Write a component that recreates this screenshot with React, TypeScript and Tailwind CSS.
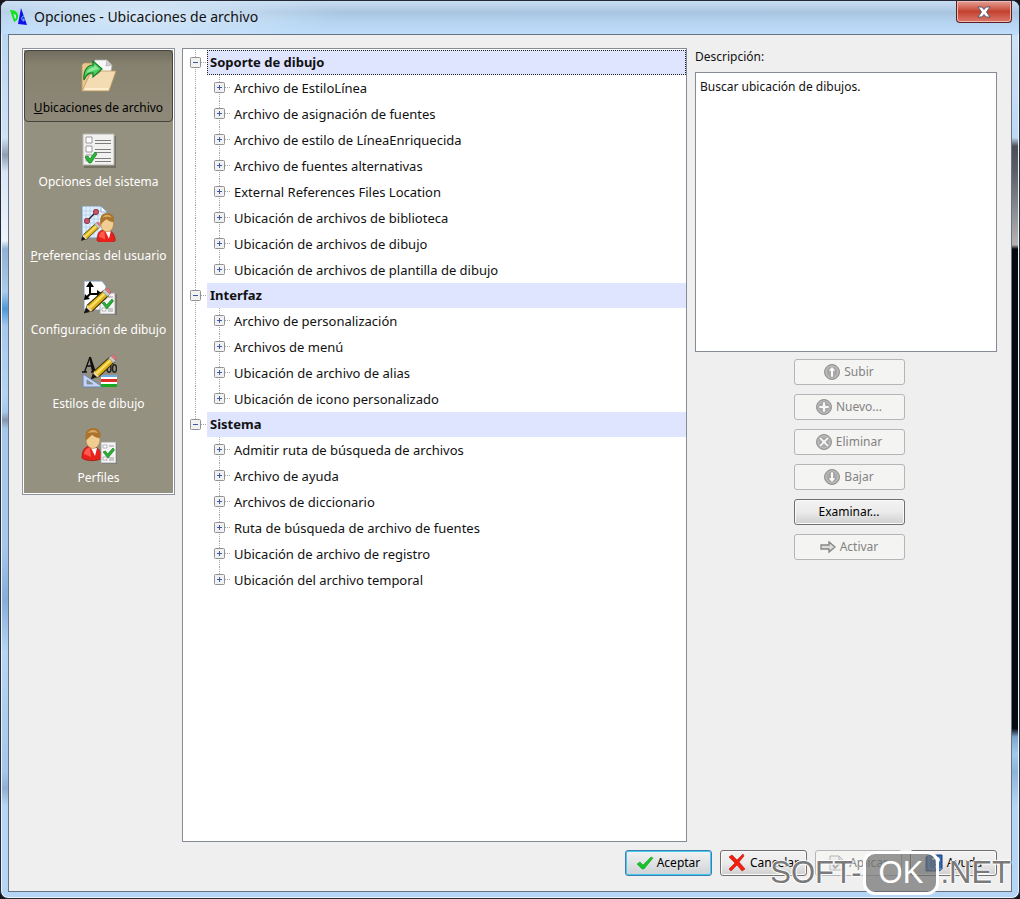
/**
 * App.tsx: CAD options dialog, "Ubicaciones de archivo" page
 * Sidebar with the option pages, tree of file locations, description + actions
 */
import React, { useState } from 'react';

interface Section {
    title: string;
    items: string[];
}

const SECTIONS: Section[] = [
    {
        title: 'Soporte de dibujo',
        items: [
            'Archivo de EstiloLínea',
            'Archivo de asignación de fuentes',
            'Archivo de estilo de LíneaEnriquecida',
            'Archivo de fuentes alternativas',
            'External References Files Location',
            'Ubicación de archivos de biblioteca',
            'Ubicación de archivos de dibujo',
            'Ubicación de archivos de plantilla de dibujo',
        ],
    },
    {
        title: 'Interfaz',
        items: [
            'Archivo de personalización',
            'Archivos de menú',
            'Ubicación de archivo de alias',
            'Ubicación de icono personalizado',
        ],
    },
    {
        title: 'Sistema',
        items: [
            'Admitir ruta de búsqueda de archivos',
            'Archivo de ayuda',
            'Archivos de diccionario',
            'Ruta de búsqueda de archivo de fuentes',
            'Ubicación de archivo de registro',
            'Ubicación del archivo temporal',
        ],
    },
];

/* ---------- Shared icon parts ---------- */

const Pencil = () => (
    <g>
        <path d="M1 34l3-9 19-17 6 6-19 18z" fill="#dfb21c" stroke="#3d300c" strokeWidth="1.300" />
        <path d="M6 27l18-17 2 2L8 29z" fill="#fbe266" />
        <path d="M1 34l3-9 6 7z" fill="#f3d9a8" />
        <path d="M0 35l2.500-7 5 4.500z" fill="#151515" />
        <path d="M22 9l3-3 6 6-3 3z" fill="#c5c8cc" stroke="#777" strokeWidth=".6" />
        <path d="M25 6c2-3.500 9 3 6 6z" fill="#e8787c" stroke="#b25558" strokeWidth=".6" />
    </g>
);

const Person = () => (
    <g>
        <path d="M0 31c0-8 3-12 9-12s10 4 11 12c-4 3.500-16 3.500-20 0z" fill="#e8211b" stroke="#9c120e" strokeWidth=".7" />
        <path d="M2 27c1-5 3-6 6-6l1 9z" fill="#ff5a4c" />
        <path d="M9 21l4 8 2-8z" fill="#fff" />
        <ellipse cx="11" cy="13" rx="7" ry="8.500" fill="#f2cd92" stroke="#a97c3e" strokeWidth=".6" />
        <path d="M4 14C2 6 5 1 11 1s9 5 7 10c-4 0-6-2-8-3-2 2-4 3-6 6z" fill="#a8742e" />
        <path d="M6 6c2-4 8-4 10 0-3-1-7-1-10 0z" fill="#d9ab62" />
    </g>
);

const CheckSheet = () => (
    <g>
        <path d="M1 1h16v21H1z" fill="#555" opacity=".5" />
        <path d="M0 0h15v21H0z" fill="#f4f4f4" stroke="#9b9b9b" strokeWidth=".8" />
        <path d="M2 3h4v3H2zM2 15h4v3H2z" fill="#fff" stroke="#999" strokeWidth=".7" />
        <path d="M8 4h5M8 16h5M8 18h5" stroke="#999" />
        <path d="M2 10l2.500-1 2 3L12 6l1.500 2-6.500 8z" fill="#27b034" stroke="#11701c" strokeWidth=".6" />
    </g>
);

/* ---------- Sidebar icons ---------- */

const FolderIcon = () => (
    <svg viewBox="0 0 36 36" className="h-9 w-9">
        <path d="M1 7l2-2h8l2 3v22L1 33z" fill="#e8c68f" stroke="#b8935b" strokeWidth=".7" />
        <path d="M9 12L14 2h12l5 5-3 20z" fill="#f6f6f6" stroke="#aaa" strokeWidth=".7" />
        <path d="M26 2l-1 6 6-1z" fill="#cfcfcf" stroke="#999" strokeWidth=".5" />
        <path d="M9 16h8l3-3h15l-7 20H1z" fill="#f3dcb2" stroke="#bd9a63" strokeWidth=".8" />
        <path d="M4 31h23" stroke="#fff3d8" strokeWidth="1.500" />
        <path d="M3 22C2 12 7 7 12 7V3l9 8-9 8v-4c-4-.5-7 2-9 7z" fill="#4bcf5f" stroke="#147a26" strokeWidth="1.200" />
        <path d="M5 15c2-4 5-6 8-6l1-2 4 4z" fill="#a9f2b2" opacity=".7" />
    </svg>
);

const SystemIcon = () => (
    <svg viewBox="0 0 36 36" className="h-9 w-9">
        <path d="M3 4h32v32H3z" fill="#5d5a4e" opacity=".6" />
        <path d="M2 2h31v31H2z" fill="#f1f1ef" stroke="#b5b5b0" />
        <path d="M5 5h6v6H5zM5 14h6v6H5zM5 23h6v6H5z" fill="#fff" stroke="#999" />
        <path d="M14 8.500h16M14 11.500h16M14 17.500h16M14 20.500h16M14 26.500h16M14 29.500h16" stroke="#7d7d7d" />
        <path d="M4 25l3-1 2 3 5-7 2 2-6 9H8z" fill="#2ab538" stroke="#14801f" strokeWidth=".7" />
    </svg>
);

const UserPrefsIcon = () => (
    <svg viewBox="0 0 36 36" className="h-9 w-9">
        <path d="M1 0h19l6 6v26H1z" fill="#e2f0fd" stroke="#6f8fb8" />
        <path d="M5 0v32M9 0v32M13 0v32M17 0v32M1 5h25M1 9h25M1 13h25M1 17h25M1 21h25" stroke="#a9cbea" strokeWidth=".7" />
        <path d="M20 0v6h6z" fill="#fff" stroke="#6f8fb8" strokeWidth=".7" />
        <path d="M6 15l9-9" stroke="#222" strokeWidth="1.500" />
        <circle cx="6" cy="15" r="2.700" fill="#c4536a" stroke="#7d2438" strokeWidth=".7" />
        <circle cx="15" cy="6" r="2.700" fill="#c4536a" stroke="#7d2438" strokeWidth=".7" />
        <g transform="translate(0 13) scale(.62)"><Pencil /></g>
        <g transform="translate(16 6) scale(.92)"><Person /></g>
    </svg>
);

const DrawingConfigIcon = () => (
    <svg viewBox="0 0 36 36" className="h-9 w-9">
        <path d="M3 1h18l4 5v24H3z" fill="#fff" stroke="#7e93b5" />
        <path d="M9 15V5M9 14h8M9 14l-4 4" stroke="#000" strokeWidth="2" fill="none" />
        <path d="M9 1l4 6H5zM22 14l-6-4v8zM3 20l1-6 5 5z" fill="#000" />
        <g transform="translate(19 13)"><CheckSheet /></g>
        <g transform="translate(3 4) scale(.84)"><Pencil /></g>
    </svg>
);

const DrawingStyleIcon = () => (
    <svg viewBox="0 0 36 36" className="h-9 w-9">
        {/* Serif A and the two zeros of a dimension value */}
        <path d="M1 18h5M10 18h7M3.500 18L9 3M8 12H5.500h6" stroke="#111" strokeWidth="1.300" fill="none" />
        <path d="M8 3h2l5 15h-4z" fill="#111" />
        <ellipse cx="28" cy="14.500" rx="2" ry="3.700" fill="none" stroke="#222" strokeWidth="1.500" />
        <ellipse cx="33.500" cy="14.500" rx="2" ry="3.700" fill="none" stroke="#222" strokeWidth="1.500" />
        <path d="M2 20v13h20z" fill="#c5d5ef" stroke="#6b83b5" />
        <path d="M6 26v4h6z" fill="#959180" stroke="#6b83b5" strokeWidth=".7" />
        <path d="M20 21h16v2H20z" fill="#6fa9e8" />
        <path d="M20 23h16v7H20z" fill="#fff" />
        <path d="M20 25h16v3H20z" fill="#e32a25" />
        <path d="M20 30h16v3H20z" fill="#17a821" />
        <g transform="translate(10 -3) scale(.8)"><Pencil /></g>
    </svg>
);

const ProfilesIcon = () => (
    <svg viewBox="0 0 36 36" className="h-9 w-9">
        <g transform="translate(1 -1)"><Person /></g>
        <g transform="translate(20 14)"><CheckSheet /></g>
    </svg>
);

interface Page {
    key: string;
    label: React.ReactNode;
    icon: React.ReactNode;
}

const PAGES: Page[] = [
    { key: 'files', label: <><u>U</u>bicaciones de archivo</>, icon: <FolderIcon /> },
    { key: 'system', label: 'Opciones del sistema', icon: <SystemIcon /> },
    { key: 'user', label: <><u>P</u>referencias del usuario</>, icon: <UserPrefsIcon /> },
    { key: 'drawing', label: 'Configuración de dibujo', icon: <DrawingConfigIcon /> },
    { key: 'styles', label: 'Estilos de dibujo', icon: <DrawingStyleIcon /> },
    { key: 'profiles', label: 'Perfiles', icon: <ProfilesIcon /> },
];

/* ---------- Button icons ---------- */

const RoundIcon = ({ d }: { d: string }) => (
    <svg viewBox="0 0 16 16" className="h-4 w-4 shrink-0">
        <circle cx="8" cy="8" r="7.500" fill="#a9a9a9" stroke="#939393" />
        <circle cx="8" cy="8" r="6" fill="none" stroke="#c2c2c2" />
        <path d={d} fill="#fafafa" stroke="#848484" strokeWidth=".5" />
    </svg>
);

const UP = 'M8 2.500l4 4.500H9.500v6h-3V7H4z';
const DOWN = 'M8 13.500L4 9h2.500V3h3v6H12z';
const PLUS = 'M6.500 3h3v3.500H13v3H9.500V13h-3V9.500H3v-3h3.500z';
const CROSS = 'M4.500 3L8 6.300 11.500 3 13 4.500 9.700 8l3.300 3.500-1.500 1.500L8 9.700 4.500 13 3 11.500 6.300 8 3 4.500z';

const ArrowIcon = () => (
    <svg viewBox="0 0 16 16" className="h-4 w-4 shrink-0">
        <path d="M1 6h8V3l6 5-6 5v-3H1z" fill="#dcdcdc" stroke="#858585" strokeWidth="1.300" />
    </svg>
);

const OkIcon = () => (
    <svg viewBox="0 0 16 16" className="h-4 w-4 shrink-0">
        <path d="M0 9l3-2 3 3 8-8 2 1-9 11H5z" fill="#17c22b" stroke="#0f9a1e" strokeWidth=".5" />
    </svg>
);

const CancelIcon = () => (
    <svg viewBox="0 0 18 18" className="h-[18px] w-[18px] shrink-0">
        <path d="M1 3l3-2 5 5 6-6 1 2-5 6 6 7-3 2-5-6-6 6-2-2 6-6z" fill="#f3200f" stroke="#c40f06" strokeWidth=".6" />
    </svg>
);

const ApplyIcon = () => (
    <svg viewBox="0 0 16 16" className="h-4 w-4 shrink-0">
        <path d="M1 1h9l4 4v10H1z" fill="#efefef" stroke="#b5b5b5" />
        <path d="M10 1v4h4" fill="none" stroke="#b5b5b5" />
        <path d="M4 10l2 3 6-6" fill="none" stroke="#b0b0b0" strokeWidth="2" />
    </svg>
);

const HelpIcon = () => (
    <svg viewBox="0 0 18 18" className="h-[18px] w-[18px] shrink-0">
        <path d="M1 3l3-2h13v14l-3 2H1z" fill="#2f67b5" stroke="#1d3f77" />
        <path d="M4 1v14h13" fill="none" stroke="#86aee3" strokeWidth=".8" />
        <path d="M8 6c0-3 6-3 6 0 0 2-3 2-3 4" fill="none" stroke="#fff" strokeWidth="1.800" />
        <circle cx="11" cy="12.500" r="1.100" fill="#fff" />
    </svg>
);

interface DialogButtonProps {
    label: string;
    icon?: React.ReactNode;
    disabled?: boolean;
    focused?: boolean;
    wide?: boolean;
}

const DialogButton: React.FC<DialogButtonProps> = ({ label, icon, disabled, focused, wide }) => {
    const width = wide ? 'w-[111px]' : 'w-[87px]';
    const look = disabled
        ? 'border-[#b3b5b6] bg-[#f4f4f2] text-[#838383]'
        : focused
            ? 'border-[#3c7fb1] bg-gradient-to-b from-[#f2f2f2] to-[#cfd3d6] text-black shadow-[inset_0_0_0_1px_#46c8f0]'
            : 'border-[#707070] bg-gradient-to-b from-[#f3f3f3] via-[#ebebeb] to-[#cfcfcf] text-black shadow-[inset_0_0_0_1px_#fafafa]';
    return (
        <button
            type="button"
            disabled={disabled}
            className={`flex h-[26px] items-center justify-center gap-1 rounded-[3px] border text-[12px] leading-4 ${width} ${look}`}
        >
            {icon}
            {label}
        </button>
    );
};

/* ---------- Tree ---------- */

interface GuideProps {
    up?: boolean;
    down?: boolean;
    box?: 'plus' | 'minus';
}

// One gutter cell: dotted connector plus the optional expander box
const Guide: React.FC<GuideProps> = ({ up, down, box }) => (
    <svg viewBox="0 0 24 26" className="h-[26px] w-6 shrink-0">
        <g stroke="#a6a6a6" strokeDasharray="1 1">
            {up && <path d="M12.500 0v13" />}
            {down && <path d="M12.500 13v13" />}
            {box && <path d="M18 12.500h5" />}
        </g>
        {box && (
            <g>
                <rect x="7.500" y="7.500" width="10" height="10" rx="1" fill="#f1f1f1" stroke="#919191" />
                <path d="M10 12.500h5" stroke="#3a5ca8" />
                {box === 'plus' && <path d="M12.500 10v5" stroke="#3a5ca8" />}
            </g>
        )}
    </svg>
);

const LocationTree = () => {
    const [closed, setClosed] = useState<string[]>([]);
    const [selected, setSelected] = useState('Soporte de dibujo');

    const toggle = (title: string) =>
        setClosed(c => (c.includes(title) ? c.filter(t => t !== title) : [...c, title]));

    return (
        <ul className="min-w-0 flex-1 border border-[#868c96] bg-white pt-px text-[13px] text-[#111]">
            {SECTIONS.map((section, s) => {
                const last = s === SECTIONS.length - 1;
                const open = !closed.includes(section.title);
                return (
                    <li key={section.title}>
                        <div className="flex h-[25px]">
                            <button type="button" aria-label={`Alternar ${section.title}`} onClick={() => toggle(section.title)}>
                                <Guide up down={!last} box={open ? 'minus' : 'plus'} />
                            </button>
                            <button
                                type="button"
                                onClick={() => setSelected(section.title)}
                                className={`flex-1 border bg-[#dfe4ff] pl-0.5 text-left leading-[23px] font-bold ${
                                    selected === section.title ? 'border-dotted border-[#222]' : 'border-transparent'
                                }`}
                            >
                                {section.title}
                            </button>
                        </div>
                        {open && (
                            <ul>
                                {section.items.map((item, i) => (
                                    <li key={item} className="flex h-[26px]">
                                        <Guide up={!last} down={!last} />
                                        <button type="button" aria-label={`Expandir ${item}`}>
                                            <Guide up down={i < section.items.length - 1} box="plus" />
                                        </button>
                                        <span className="truncate pl-[3px] leading-[26px]">{item}</span>
                                    </li>
                                ))}
                            </ul>
                        )}
                    </li>
                );
            })}
        </ul>
    );
};

/* ---------- Window ---------- */

const TitleBar = () => (
    <header className="flex h-[33px] items-start bg-[radial-gradient(ellipse_200px_28px_at_140px_14px,#d9eafa,transparent),linear-gradient(to_bottom,#c9def2,#a9c5e0_35%,#b3d2ef_60%,#c0defb)]">
        <svg viewBox="0 0 18 20" className="mt-1.5 ml-[9px] h-5 w-[18px]">
            <path d="M0 3c6 0 8 3 8 6s-1 5-4 6z" fill="#12e21a" />
            <path d="M3.500 7c2 0 2.500 1 2.500 2.500S6 11 5 12z" fill="#c4e6f5" />
            <path d="M11 1l6 17-9-1z" fill="#1212e6" />
            <path d="M14 9c-3 0-3 5 0 5v-2h-1" fill="none" stroke="#8cc9ff" />
        </svg>
        <h1 className="mt-1 ml-1.5 flex-1 text-[14px] leading-6 text-[#111]">Opciones - Ubicaciones de archivo</h1>
        <button
            type="button"
            aria-label="Cerrar"
            className="mr-[7px] flex h-[22px] w-[56px] items-center justify-center rounded-b border border-t-0 border-[#5b1f1d] bg-gradient-to-b from-[#e3a197] via-[#c4402f] via-50% to-[#d9776a] shadow-[inset_0_0_0_1px_#f0b8ae]"
        >
            <svg viewBox="0 0 14 12" className="h-3 w-3.5">
                <path d="M1 1h4l2 2.500L9 1h4L9.500 6l3.500 5H9L7 8.500 5 11H1l3.500-5z" fill="#fff" stroke="#5b5f6e" />
            </svg>
        </button>
    </header>
);

const Watermark = () => (
    <div className="pointer-events-none absolute right-2 bottom-[3px] flex items-center font-['Liberation_Sans',sans-serif] text-[31px] leading-[42px] text-[#7a7a7a] [text-shadow:1px_0_1px_#fff,-1px_0_1px_#fff,0_1px_1px_#fff,0_-1px_1px_#fff]">
        <span>SOFT-</span>
        <span className="mx-px rounded-xl border-[3px] border-white bg-[#6f6f6f]/70 px-[13px] leading-[38px] text-white [text-shadow:none]">OK</span>
        <span>.NET</span>
    </div>
);

const App: React.FC = () => {
    const [page, setPage] = useState('files');

    return (
        <div className="min-h-screen bg-[#15161c] font-['Noto_Sans','Open_Sans',sans-serif]">
            <div className="relative flex min-h-screen flex-col overflow-hidden rounded-lg border border-[#262833] bg-[#b4d5f5] shadow-[inset_0_0_0_1px_#e9f4fd]">
                <TitleBar />

                <div className="flex flex-1">
                    {/* Glass edges, with what lies behind the window showing through */}
                    <div className="my-px ml-px w-1.5 bg-[linear-gradient(to_bottom,#b9d6f2,#cfe2f6_12%,#8f9cb4_14%,#d8e6f6_16%,#eef4fc_24%,#8fb2d6_25%,#a9cbec_30%,#4f97d6_32%,#a4c9ee_34%,#b4d5f5_42%,#a4c9ee_44%,#8795ad_45%,#a4c8ec_46%,#a4c8ec_60%,#86aedb_66%,#b4d5f5_72%,#a4c8ec_86%,#8fb0d4_88%,#b4d5f5_90%)]" />

                    <div className="flex min-w-0 flex-1 flex-col border border-[#69737f] bg-[#efefef] pt-[13px] pr-3.5 pb-[15px] pl-[13px]">
                        <main className="flex flex-1">
                            <nav className="flex w-[153px] flex-col gap-0.5 self-start border border-[#8e929c] bg-[#959180] px-px pt-px pb-0.5 shadow-[inset_0_0_0_1px_#fff]">
                                {PAGES.map(p => (
                                    <button
                                        key={p.key}
                                        type="button"
                                        onClick={() => setPage(p.key)}
                                        className={`flex h-[72px] flex-col items-center gap-1.5 rounded-sm border pt-[7px] text-[12px] leading-4 whitespace-nowrap ${
                                            page === p.key
                                                ? 'border-[#45433b] bg-gradient-to-b from-[#716d60] via-[#87826f] via-20% to-[#8d8878] text-black'
                                                : 'border-transparent text-white'
                                        }`}
                                    >
                                        {p.icon}
                                        <span>{p.label}</span>
                                    </button>
                                ))}
                            </nav>

                            <div className="ml-[7px] flex min-w-0 flex-1">
                                <LocationTree />
                            </div>

                            <section className="ml-2 flex w-[302px] flex-col text-[12px] text-[#111]">
                                <label htmlFor="description" className="mb-1.5 leading-[18px]">Descripción:</label>
                                <textarea
                                    id="description"
                                    readOnly
                                    value="Buscar ubicación de dibujos."
                                    className="h-[280px] w-full resize-none border border-[#868c96] bg-white px-1 py-1.5 leading-4 outline-none"
                                />
                                <div className="mt-[7px] flex flex-col items-center gap-[9px] pl-1.5">
                                    <DialogButton wide disabled label="Subir" icon={<RoundIcon d={UP} />} />
                                    <DialogButton wide disabled label="Nuevo..." icon={<RoundIcon d={PLUS} />} />
                                    <DialogButton wide disabled label="Eliminar" icon={<RoundIcon d={CROSS} />} />
                                    <DialogButton wide disabled label="Bajar" icon={<RoundIcon d={DOWN} />} />
                                    <DialogButton wide label="Examinar..." />
                                    <DialogButton wide disabled label="Activar" icon={<ArrowIcon />} />
                                </div>
                            </section>
                        </main>

                        <footer className="mt-2 flex justify-end gap-2">
                            <DialogButton focused label="Aceptar" icon={<OkIcon />} />
                            <DialogButton label="Cancelar" icon={<CancelIcon />} />
                            <DialogButton disabled label="Aplicar" icon={<ApplyIcon />} />
                            <DialogButton label="Ayuda" icon={<HelpIcon />} />
                        </footer>
                    </div>

                    <div className="my-px mr-px w-1.5 bg-[linear-gradient(to_bottom,#cfe3f7,#bcd8f3_12%,#4c4f58_13%,#5d6068_16%,#b4b4b4_24.5%,#05080c_25%,#05080c_81%,#7fa5cf_82%,#a3c8ed_84%,#8db3da_86%,#b4d5f5_90%)]" />
                </div>
                <div className="h-1.5" />

                <Watermark />
            </div>
        </div>
    );
};

export default App;
